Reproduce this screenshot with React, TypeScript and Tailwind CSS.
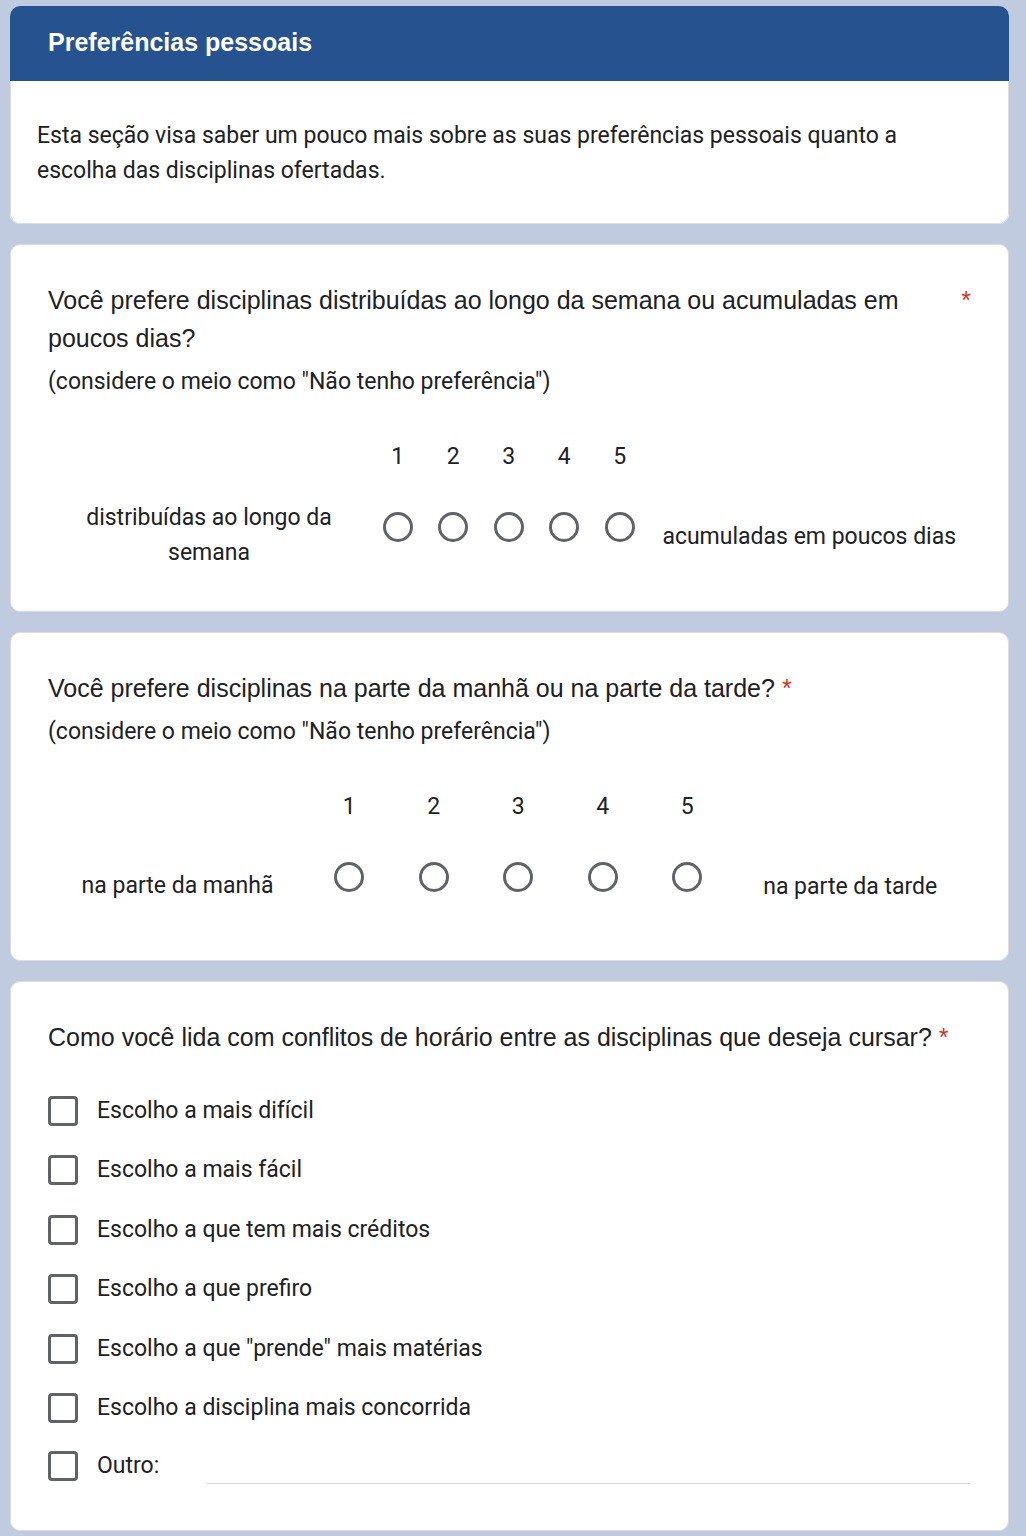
import React from "react";

const arial = "font-['Liberation_Sans',Arial,sans-serif]";
const roboto = "font-['Roboto',sans-serif]";

function Radio() {
  return (
    <span className="block h-[30px] w-[30px] rounded-full border-[3px] border-[#5f6368] bg-white" />
  );
}

function Checkbox() {
  return (
    <span className="block h-[30px] w-[30px] shrink-0 rounded-[4px] border-[3px] border-[#5f6368] bg-white" />
  );
}

interface ScaleProps {
  leftLabel: string;
  rightLabel: string;
  colWidth: string;
  leftClass: string;
  top: string;
}

function Scale({ leftLabel, rightLabel, colWidth, leftClass, top }: ScaleProps) {
  const nums = [1, 2, 3, 4, 5];
  return (
    <div className={`${top} ${roboto} text-[23px] text-[#202124]`}>
      {/* numbers */}
      <div className="flex h-[30px] items-center leading-[30px]">
        <div className={leftClass} />
        {nums.map((n) => (
          <div key={n} className={`${colWidth} text-center`}>
            {n}
          </div>
        ))}
      </div>
      {/* radios */}
      <div className="mt-[28px] flex h-[70px] items-center">
        <div className={`${leftClass} text-center leading-[35px]`}>{leftLabel}</div>
        {nums.map((n) => (
          <div key={n} className={`${colWidth} flex justify-center self-start pt-[12px]`}>
            <Radio />
          </div>
        ))}
        <div className="flex-1 pt-[2px] text-center leading-[35px]">{rightLabel}</div>
      </div>
    </div>
  );
}

function QuestionTitle({ text }: { text: string }) {
  return (
    <div className={`flex ${arial} text-[25px] leading-[38px] text-[#202124]`}>
      <span>{text}</span>
      <span className="shrink-0 pl-[7px] text-[#d93025]">*</span>
    </div>
  );
}

const options = [
  "Escolho a mais difícil",
  "Escolho a mais fácil",
  "Escolho a que tem mais créditos",
  "Escolho a que prefiro",
  'Escolho a que "prende" mais matérias',
  "Escolho a disciplina mais concorrida",
];

export default function App() {
  return (
    <div className="min-h-[1536px] w-[1026px] bg-[#c0cbdf] pl-[10px] pt-[6px]">
      <div className="flex w-[999px] flex-col gap-[20px]">
        {/* Section header */}
        <div className="overflow-hidden rounded-[10px] bg-white">
          <div className={`flex h-[75px] items-center bg-[#265390] px-[38px] pb-[2px] ${arial} text-[25px] font-bold text-white`}>
            Preferências pessoais
          </div>
          <p className={`rounded-b-[10px] border-x border-b border-[#dadce0] px-[26px] pb-[35px] pt-[37px] ${roboto} text-[23px] leading-[35px] text-[#202124]`}>
            Esta seção visa saber um pouco mais sobre as suas preferências pessoais quanto a escolha das disciplinas ofertadas.
          </p>
        </div>

        {/* Question 1 */}
        <div className="rounded-[10px] border border-[#dadce0] bg-white px-[37px] pb-[41px] pt-[36px]">
          <QuestionTitle text="Você prefere disciplinas distribuídas ao longo da semana ou acumuladas em poucos dias?" />
          <p className={`mt-[10px] ${roboto} text-[23px] leading-[30px] text-[#202124]`}>
            (considere o meio como "Não tenho preferência")
          </p>
          <Scale
            leftLabel="distribuídas ao longo da semana"
            rightLabel="acumuladas em poucos dias"
            colWidth="w-[55.5px]"
            leftClass="w-[322px] shrink-0 px-[30px]"
            top="mt-[45px]"
          />
        </div>

        {/* Question 2 */}
        <div className="rounded-[10px] border border-[#dadce0] bg-white px-[37px] pb-[40px] pt-[36px]">
          <QuestionTitle text="Você prefere disciplinas na parte da manhã ou na parte da tarde?" />
          <p className={`mt-[10px] ${roboto} text-[23px] leading-[30px] text-[#202124]`}>
            (considere o meio como "Não tenho preferência")
          </p>
          <Scale
            leftLabel="na parte da manhã"
            rightLabel="na parte da tarde"
            colWidth="w-[84.5px]"
            leftClass="w-[259px] shrink-0"
            top="mt-[45px]"
          />
        </div>

        {/* Question 3 */}
        <div className="rounded-[10px] border border-[#dadce0] bg-white px-[37px] pb-[36px] pt-[36px]">
          <QuestionTitle text="Como você lida com conflitos de horário entre as disciplinas que deseja cursar?" />
          <div className={`mt-[25px] ${roboto} text-[23px] text-[#202124]`}>
            {options.map((o) => (
              <div key={o} className="flex h-[59.5px] items-center gap-[19px]">
                <Checkbox />
                <span>{o}</span>
              </div>
            ))}
            <div className="flex h-[56px] items-center">
              <Checkbox />
              <span className="ml-[19px] w-[110px]">Outro:</span>
              <div className="mt-[34px] h-px flex-1 bg-[#dadce0]" />
            </div>
          </div>
        </div>
      </div>
    </div>
  );
}
